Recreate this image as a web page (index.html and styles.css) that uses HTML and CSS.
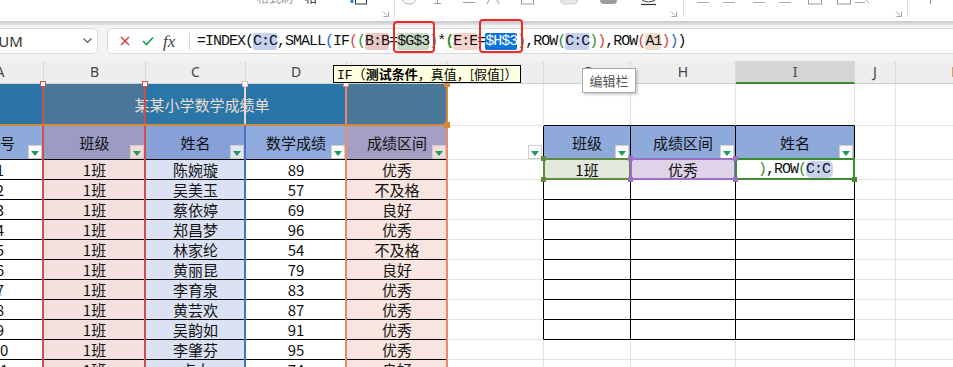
FILE: index.html
```html
<!DOCTYPE html>
<html lang="zh">
<head>
<meta charset="utf-8">
<title>某某小学数学成绩单</title>
<link rel="stylesheet" href="styles.css">
</head>
<body>
<div class="ribbon">
  <span class="rb-t gray">格式刷</span>
  <span class="rb-t dark">格</span>
  <svg class="rb-icons" width="623" height="21" viewBox="330 0 623 21">
    <circle cx="352" cy="1.5" r="1.6" fill="#2b6fd6"/>
    <rect x="355.5" y="-6" width="11" height="10" fill="none" stroke="#333"/>
    <path d="M403 0a6 4 0 0 0 12 0" fill="none" stroke="#aaa"/>
    <path d="M437.5 0v3M434 3.5h7" stroke="#999"/>
    <path d="M463 2.5h12" stroke="#999"/>
    <path d="M489 0l-2 4M497 0l2 4" stroke="#999"/>
    <rect x="521.5" y="-4" width="12" height="8" fill="none" stroke="#999"/>
    <rect x="560.5" y="-4" width="17" height="8" rx="4" fill="#e6e6e6" stroke="#cfcfcf"/>
    <rect x="600" y="-4" width="17" height="8" rx="4" fill="#9c9c9c"/>
    <path d="M642 0.5q6 3 13 0" fill="none" stroke="#444"/>
    <path d="M641 4.5h15" stroke="#333" stroke-width="1.2"/>
    <path d="M697 2.5h12M723 2.5h12M753 2.5h12M779 2.5h12" stroke="#aaa"/>
    <rect x="808.5" y="-4" width="13" height="8" fill="none" stroke="#999"/>
    <rect x="837.5" y="-4" width="13" height="8" fill="none" stroke="#999"/>
    <path d="M855 2.5h10M866 0l3 3" stroke="#aaa"/>
    <path d="M930.5 0v4" stroke="#888"/>
    <path d="M394.5 0v17M683.5 0v17M907.5 0v17" stroke="#dedede"/>
    <path d="M383 11.5l4 4M383.5 16.5h5v-5" fill="none" stroke="#9a9a9a" stroke-width="0.9"/>
    <path d="M671 11.5l4 4M671.5 16.5h5v-5" fill="none" stroke="#9a9a9a" stroke-width="0.9"/>
    <path d="M896 11.5l4 4M896.5 16.5h5v-5" fill="none" stroke="#9a9a9a" stroke-width="0.9"/>
  </svg>
</div>
<div class="band"></div>
<div class="fbar">
  <div class="namebox">
    <span class="nb-text">SUM</span>
    <svg class="chev" width="9" height="6" viewBox="0 0 9 6"><path d="M0.5 0.5L4.5 4.5L8.5 0.5" fill="none" stroke="#555" stroke-width="1.1"/></svg>
  </div>
  <div class="fbox">
    <svg class="ic-x" width="10" height="10" viewBox="0 0 10 10"><path d="M1 1L9 9M9 1L1 9" stroke="#e0393e" stroke-width="1.5"/></svg>
    <svg class="ic-ok" width="12" height="10" viewBox="0 0 12 10"><path d="M1 5L4.5 8.5L11 1.5" fill="none" stroke="#1e9b5a" stroke-width="1.6"/></svg>
    <span class="fx">fx</span>
    <span class="fsep"></span>
    <div class="ftext">=INDEX(<span class="hl hb">C:C</span>,SMALL<span class="pb">(</span>IF<span class="pr">(</span><span class="pg">(</span><span class="hl hp">B:B</span>=<span class="hl hg">$G$3</span><span class="pg">)</span>*<span class="pg bold">(</span><span class="hl hs">E:E</span>=<span class="hl sel">$H$3</span><span class="pg">)</span>,ROW<span class="pg">(</span><span class="hl hb">C:C</span><span class="pg">)</span><span class="pr">)</span>,ROW<span class="pr">(</span><span class="hl ht">A1</span><span class="pr">)</span><span class="pb">)</span>)</div>
  </div>
</div>

<div class="sheet">
  <!-- column headers -->
  <div class="c h">A</div><div class="c h">B</div><div class="c h">C</div><div class="c h">D</div><div class="c h">E</div><div class="c h">F</div><div class="c h">G</div><div class="c h">H</div><div class="c h sel">I</div><div class="c h">J</div><div class="c h">K</div>

  <!-- row 1: title -->
  <div class="c title">某某小学数学成绩单</div><div class="c"></div><div class="c tt"></div><div class="c tt"></div><div class="c tt"></div><div class="c"></div><div class="c"></div>

  <!-- row 2: headers -->
  <div class="c t th ha">序号<span class="fb"></span></div>
  <div class="c t th hbcol">班级<span class="fb pk"></span></div>
  <div class="c t th hccol">姓名<span class="fb bl"></span></div>
  <div class="c t th hd">数学成绩<span class="fb"></span></div>
  <div class="c t th hecol">成绩区间<span class="fb pk"></span></div>
  <div class="c tl"><span class="fb"></span></div>
  <div class="c t rh">班级<span class="fb"></span></div>
  <div class="c t rh">成绩区间<span class="fb"></span></div>
  <div class="c t rh">姓名<span class="fb"></span></div>
  <div class="c"></div><div class="c"></div>

  <!-- data rows -->
  <div class="c t">1</div><div class="c t pb">1班</div><div class="c t pc">陈婉璇</div><div class="c t">89</div><div class="c t pe">优秀</div>
  <div class="c tl"></div><div class="c t g3">1班</div><div class="c t h3">优秀</div>
  <div class="c t i3"><span class="edit"><span class="pg">)</span>,ROW<span class="pg">(</span><span class="ecc">C:C</span></span></div>
  <div class="c"></div><div class="c"></div>

  <div class="c t">2</div><div class="c t pb">1班</div><div class="c t pc">吴美玉</div><div class="c t">57</div><div class="c t pe">不及格</div>
  <div class="c tl"></div><div class="c t"></div><div class="c t"></div><div class="c t"></div><div class="c"></div><div class="c"></div>

  <div class="c t">3</div><div class="c t pb">1班</div><div class="c t pc">蔡依婷</div><div class="c t">69</div><div class="c t pe">良好</div>
  <div class="c tl"></div><div class="c t"></div><div class="c t"></div><div class="c t"></div><div class="c"></div><div class="c"></div>

  <div class="c t">4</div><div class="c t pb">1班</div><div class="c t pc">郑昌梦</div><div class="c t">96</div><div class="c t pe">优秀</div>
  <div class="c tl"></div><div class="c t"></div><div class="c t"></div><div class="c t"></div><div class="c"></div><div class="c"></div>

  <div class="c t">5</div><div class="c t pb">1班</div><div class="c t pc">林家纶</div><div class="c t">54</div><div class="c t pe">不及格</div>
  <div class="c tl"></div><div class="c t"></div><div class="c t"></div><div class="c t"></div><div class="c"></div><div class="c"></div>

  <div class="c t">6</div><div class="c t pb">1班</div><div class="c t pc">黄丽昆</div><div class="c t">79</div><div class="c t pe">良好</div>
  <div class="c tl"></div><div class="c t"></div><div class="c t"></div><div class="c t"></div><div class="c"></div><div class="c"></div>

  <div class="c t">7</div><div class="c t pb">1班</div><div class="c t pc">李育泉</div><div class="c t">83</div><div class="c t pe">优秀</div>
  <div class="c tl"></div><div class="c t"></div><div class="c t"></div><div class="c t"></div><div class="c"></div><div class="c"></div>

  <div class="c t">8</div><div class="c t pb">1班</div><div class="c t pc">黄芸欢</div><div class="c t">87</div><div class="c t pe">优秀</div>
  <div class="c tl"></div><div class="c t"></div><div class="c t"></div><div class="c t"></div><div class="c"></div><div class="c"></div>

  <div class="c t">9</div><div class="c t pb">1班</div><div class="c t pc">吴韵如</div><div class="c t">91</div><div class="c t pe">优秀</div>
  <div class="c tl"></div><div class="c t"></div><div class="c t"></div><div class="c t"></div><div class="c"></div><div class="c"></div>

  <div class="c t">10</div><div class="c t pb">1班</div><div class="c t pc">李肇芬</div><div class="c t">95</div><div class="c t pe">优秀</div>
  <div class="c"></div><div class="c"></div><div class="c"></div><div class="c"></div><div class="c"></div><div class="c"></div>

  <div class="c t">11</div><div class="c t pb">1班</div><div class="c t pc">卢木</div><div class="c t">74</div><div class="c t pe">良好</div>
  <div class="c"></div><div class="c"></div><div class="c"></div><div class="c"></div><div class="c"></div><div class="c"></div>
</div>

<!-- reference highlight frames -->
<div class="ref ref-c"></div>
<div class="ref pale"></div>
<div class="ref ref-b"></div>
<div class="ref ref-e"></div>
<div class="ref ref-a1"></div>
<span class="hdl hw red" style="left:40px"></span>
<span class="hdl hw red" style="left:142px"></span>
<span class="hdl hw palec" style="left:242px"></span>
<span class="hdl hw sal" style="left:343px"></span>
<span class="hdl tanf" style="left:444px;top:81px"></span>
<span class="hdl tanf" style="left:444px;top:122px"></span>

<div class="ref ref-g3"></div>
<div class="ref ref-h3"></div>
<div class="ref ref-i3"></div>
<span class="sq grn" style="left:541px;top:156px"></span>
<span class="sq grn" style="left:541px;top:177px"></span>
<span class="sq pur" style="left:628px;top:156px"></span>
<span class="sq pur" style="left:628px;top:177px"></span>
<span class="sq pur" style="left:733px;top:156px"></span>
<span class="sq pur" style="left:733px;top:177px"></span>
<span class="sq act" style="left:852px;top:177px"></span>

<!-- annotation boxes -->
<div class="anno a1"></div>
<div class="anno a2"></div>

<!-- tooltips -->
<div class="tip-if">IF<span class="cj">（<b>测试条件</b>，真值，[假值]）</span></div>
<div class="tip-bar">编辑栏</div>
</body>
</html>
```
FILE: styles.css
```css
* { box-sizing: border-box; margin: 0; padding: 0; }
html, body { width: 953px; height: 367px; overflow: hidden; background: #fff; }
body { position: relative; font-family: "Noto Sans CJK SC", "Noto Sans", sans-serif; color: #111; }

/* ribbon remnant */
.ribbon { height: 21px; display: flex; align-items: flex-start; overflow: hidden; padding-left: 257px; background: #fff; }
.rb-t { font-size: 12px; line-height: 14px; margin-top: -9px; white-space: nowrap; flex: none; }
.rb-t.gray { color: #9a9a9a; width: 36px; }
.rb-t.dark { color: #222; margin-left: 12px; width: 25px; }
.rb-icons { flex: none; display: block; }

.band { height: 4px; background: linear-gradient(#c6cacf, #dfe2e5); }

/* formula bar */
.fbar { height: 36px; background: #f3f3f3; display: flex; align-items: flex-start; padding-top: 3px; }
.namebox { flex: none; margin-left: -22px; width: 120px; height: 26px; background: #fff; border: 1px solid #dadada; border-radius: 5px; display: flex; align-items: center; padding-left: 11px; }
.nb-text { font-family: "Noto Sans", "Liberation Sans", sans-serif; font-size: 15px; color: #333; }
.chev { margin-left: auto; margin-right: 5px; }
.fbox { flex: 1; margin-left: 9px; margin-right: -10px; height: 26px; background: #fff; border: 1px solid #dadada; border-radius: 5px; display: flex; align-items: center; padding-left: 12px; }
.ic-x, .ic-ok { flex: none; display: block; }
.ic-ok { margin-left: 12px; }
.fx { flex: none; width: 14px; margin-left: 9px; font-family: "Liberation Serif", serif; font-style: italic; font-size: 17px; color: #444; line-height: 1; }
.fsep { flex: none; width: 1px; height: 17px; background: #d4d4d4; margin-left: 12px; }
.ftext { margin-left: 7px; font-family: "Liberation Mono", monospace; font-size: 15px; letter-spacing: -1px; color: #111; white-space: nowrap; line-height: 17px; }
.hl { border-radius: 2px; }
.hb { background: #c5d1ef; }
.hp { background: #ecc9c9; }
.hg { background: #c9dbc3; }
.hs { background: #f7d3cd; }
.ht { background: #f1dccb; }
.sel { background: #0b74d8; color: #fff; }
.pb { color: #2f5fd0; }
.pr { color: #d9443c; }
.pg { color: #3d8a2e; }
.bold { font-weight: bold; }

/* sheet grid */
.sheet { display: grid; margin-left: -43px; grid-template-columns: 87px 102px 100px 101px 101px 96px 87px 105px 119px 41px 120px; grid-template-rows: 23px 42px 34px repeat(11, 20px); }
.c { border-right: 1px solid #e2e2e2; border-bottom: 1px solid #e2e2e2; display: flex; align-items: center; justify-content: center; position: relative; font-size: 15px; line-height: 1; white-space: nowrap; overflow: hidden; background: #fff; }
.h { background: #eeeeee; border-right-color: #d9d9d9; border-bottom-color: #d0d0d0; font-family: "Noto Sans", sans-serif; font-size: 14px; color: #444; }
.h.sel { background: #d5d5d5; color: #444; border-bottom: 2px solid #3b8a2c; }

.title { grid-column: span 5; color: #eedcd5; border-right-color: transparent; border-bottom-color: transparent;
  background: linear-gradient(to right, #2b73a5 0 87px, #48779b 87px 189px, #2a76a7 189px 289px, #2876a8 289px 390px, #4a7898 390px 491px); }
.tt { border-bottom-color: #000; }

.t { border-right-color: #000; border-bottom-color: #000; }
.tl { border-right-color: #000; }
.th { color: #111; }
.ha { background: #8eaadb; }
.hbcol { background: #9c9bc4; }
.hccol { background: #87a1d8; }
.hd { background: #8faadc; }
.hecol { background: #a4a0c4; }
.rh { background: #8eaadb; }

.pb.c, .c.pb { background: #f4dfdf; color: #111; }
.pc { background: #dbe2f4; }
.pe { background: #f9e5df; }
.g3 { background: #e2e9dc; }
.h3 { background: #dfd3ea; }
.i3 { background: #fff; }
.edit { font-family: "Liberation Mono", monospace; font-size: 15px; letter-spacing: -1px; line-height: 17px; color: #111; padding-left: 1px; }
.ecc { background: #c7d3ee; border-radius: 5px; padding-right: 3px; }

/* filter buttons */
.fb { position: absolute; right: 1px; bottom: 0; width: 14px; height: 14px; background: #fff; border: 1px solid #cfcfcf; display: flex; align-items: center; justify-content: center; }
.fb::after { content: ""; border-left: 4px solid transparent; border-right: 4px solid transparent; border-top: 5px solid #1f9c5c; margin-top: 2px; }
.fb.pk { background: #f3dcd8; }
.fb.bl { background: #dfe5f2; }

/* reference frames (overlays) */
.ref { position: absolute; pointer-events: none; }
.ref-b { left: 42px; top: 84px; width: 104px; height: 300px; border-left: 2px solid #c9504d; border-right: 2px solid #c9504d; }
.ref-c { left: 144px; top: 126px; width: 102px; height: 260px; border-left: 2px solid #4a70c6; border-right: 2px solid #4a70c6; }
.pale { left: 244px; top: 84px; width: 2px; height: 42px; background: #efd5d0; }
.ref-e { left: 345px; top: 84px; width: 103px; height: 300px; border-left: 2px solid #ea8870; border-right: 2px solid #ea8870; }
.ref-a1 { left: -50px; top: 82px; width: 498px; height: 44px; border-right: 2px solid #d2893a; border-bottom: 2px solid #d2893a; }
.hdl { position: absolute; width: 6px; height: 6px; top: 81px; }
.hw { background: #fff; border: 1px solid; }
.red { border-color: #c9504d; }
.palec { border-color: #e2b9b2; }
.sal { border-color: #ea8870; }
.tanf { background: #d2893a; }

.ref-g3 { left: 543px; top: 158px; width: 88px; height: 22px; border: 2px solid #5d8d3c; }
.ref-h3 { left: 630px; top: 158px; width: 106px; height: 22px; border: 2px solid #9b6fc6; }
.ref-i3 { left: 735px; top: 158px; width: 120px; height: 22px; border: 2px solid #3e8a2e; }
.sq { position: absolute; width: 5px; height: 5px; }
.grn { background: #5d8d3c; }
.pur { background: #9b6fc6; }
.act { background: #3e8a2e; }

.anno { position: absolute; border: 2.5px solid #f02a2a; border-radius: 4px; }
.a1 { left: 393px; top: 21px; width: 42px; height: 32px; }
.a2 { left: 479px; top: 19px; width: 44px; height: 34px; }

/* tooltips */
.tip-if { position: absolute; left: 333px; top: 65px; height: 18px; background: #ffffe1; border: 1px solid #000; padding: 0 3px; font-family: "Liberation Mono", monospace; font-size: 13px; line-height: 16px; color: #000; white-space: nowrap; }
.tip-if .cj { font-family: "Noto Sans CJK SC", sans-serif; }
.tip-if b { font-weight: 700; }
.tip-bar { position: absolute; left: 582px; top: 68px; width: 54px; height: 25px; background: #fff; border: 1px solid #a9a9a9; box-shadow: 2px 2px 2px rgba(0,0,0,0.18); font-size: 13px; color: #555; display: flex; align-items: center; justify-content: center; }
```
